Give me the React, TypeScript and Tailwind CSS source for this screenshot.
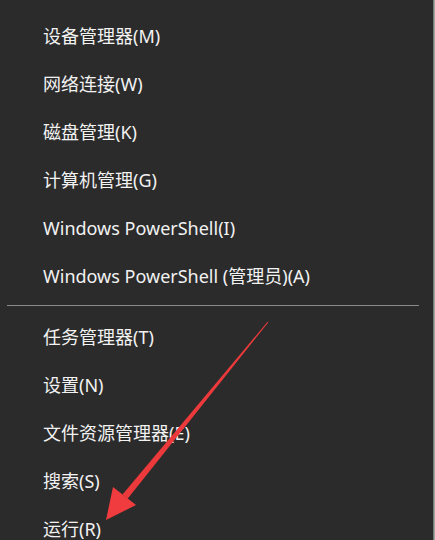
const topItems = [
  "设备管理器(M)",
  "网络连接(W)",
  "磁盘管理(K)",
  "计算机管理(G)",
  "Windows PowerShell(I)",
  "Windows PowerShell (管理员)(A)",
];

const bottomItems = ["任务管理器(T)", "设置(N)", "文件资源管理器(E)", "搜索(S)", "运行(R)"];

const MenuRow = ({ label }: { label: string }) => (
  <div className="h-12 shrink-0 flex items-center pl-[43px] text-[18px] text-[#f2f2f2] whitespace-nowrap">
    {label}
  </div>
);

const App = () => {
  return (
    <div
      className="relative w-[435px] h-[540px] overflow-hidden bg-[#2b2b2b] flex"
      style={{ fontFamily: '"Noto Sans", "Noto Sans CJK SC", sans-serif' }}
    >
      <div className="flex-1 flex flex-col pt-3">
        {topItems.map((item) => (
          <MenuRow key={item} label={item} />
        ))}
        <div className="shrink-0 mt-[5px] mb-[7px] ml-[7px] mr-[14px] h-px bg-[#8a8a8a]" />
        {bottomItems.map((item) => (
          <MenuRow key={item} label={item} />
        ))}
      </div>
      {/* window edge */}
      <div className="w-px bg-[#6f7f73]" />
      <div className="w-px bg-[#a0a4a0]" />

      {/* red annotation arrow */}
      <svg className="absolute inset-0 pointer-events-none" width="435" height="540" viewBox="0 0 435 540">
        <polygon
          points="268.4,322.3 267.6,321.7 122.5,494.5 127.6,498.8"
          fill="#ec3a3c"
        />
        <polygon points="106,520 113,487 136,505" fill="#f03c3e" />
      </svg>
    </div>
  );
};

export default App;
